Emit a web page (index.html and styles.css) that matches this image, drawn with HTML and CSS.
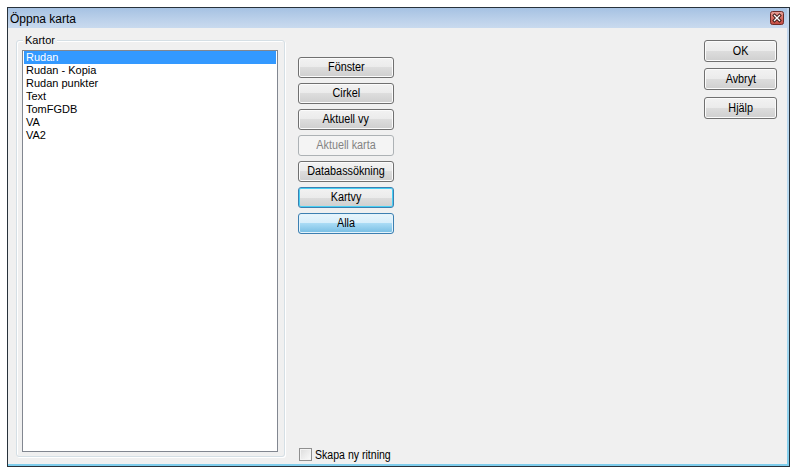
FILE: index.html
```html
<!DOCTYPE html>
<html lang="sv">
<head>
<meta charset="utf-8">
<title>Öppna karta</title>
<link rel="stylesheet" href="styles.css">
</head>
<body>
<div class="window">
  <div class="titlebar">
    <span class="title">Öppna karta</span>
    <span class="close">
      <svg width="14" height="14" viewBox="0 0 14 14">
        <defs>
          <linearGradient id="cg" x1="0" y1="0" x2="0" y2="1">
            <stop offset="0" stop-color="#e9a49c"/>
            <stop offset="0.5" stop-color="#d56d63"/>
            <stop offset="1" stop-color="#c24a40"/>
          </linearGradient>
        </defs>
        <rect x="0.5" y="0.5" width="13" height="13" rx="2" fill="url(#cg)" stroke="#6e2b26"/>
        <path d="M4.5 4.5 L9.5 9.5 M9.5 4.5 L4.5 9.5" stroke="#3b1714" stroke-width="3.2" stroke-linecap="square"/>
        <path d="M4.5 4.5 L9.5 9.5 M9.5 4.5 L4.5 9.5" stroke="#ffffff" stroke-width="1.4" stroke-linecap="square"/>
      </svg>
    </span>
  </div>
  <div class="client">
    <div class="group">
      <span class="group-label">Kartor</span>
      <ul class="listbox">
        <li class="selected">Rudan</li>
        <li>Rudan - Kopia</li>
        <li>Rudan punkter</li>
        <li>Text</li>
        <li>TomFGDB</li>
        <li>VA</li>
        <li>VA2</li>
      </ul>
    </div>
    <div class="actions">
      <button class="btn"><span class="cap">Fönster</span></button>
      <button class="btn"><span class="cap">Cirkel</span></button>
      <button class="btn"><span class="cap">Aktuell vy</span></button>
      <button class="btn disabled"><span class="cap">Aktuell karta</span></button>
      <button class="btn"><span class="cap">Databassökning</span></button>
      <button class="btn focused"><span class="cap">Kartvy</span></button>
      <button class="btn hot"><span class="cap">Alla</span></button>
      <label class="check"><span class="box"></span><span class="check-text">Skapa ny ritning</span></label>
    </div>
    <div class="dialog-buttons">
      <button class="btn"><span class="cap">OK</span></button>
      <button class="btn second"><span class="cap">Avbryt</span></button>
      <button class="btn third"><span class="cap">Hjälp</span></button>
    </div>
  </div>
</div>
</body>
</html>
```
FILE: styles.css
```css
body {
  margin: 0;
  background: #ffffff;
  font-family: "Liberation Sans", Arial, sans-serif;
}

.window {
  margin: 7px 0 0 7px;
  width: 783px;
  height: 460px;
  box-sizing: border-box;
  border: 1px solid #28323b;
  padding: 0 2px 2px 0;
  display: flex;
  flex-direction: column;
  background: linear-gradient(#c3d6ec, #b4dcf2 60%, #7fcdec);
}

.titlebar {
  height: 20px;
  flex: none;
  display: flex;
  align-items: center;
  padding: 0 3px 0 2px;
  background: linear-gradient(#a6c2e3, #bcd1ea 60%, #c9daee);
}

.title {
  flex: 1;
  font-size: 12px;
  color: #000;
  padding-top: 1px;
}

.close {
  width: 14px;
  height: 14px;
  display: block;
}

.close svg {
  display: block;
}

.client {
  flex: 1;
  display: flex;
  background: #f0f0f0;
  padding: 12px 0 0 8px;
}

.group {
  position: relative;
  flex: none;
  width: 269px;
  height: 417px;
  box-sizing: border-box;
  border: 1px solid #d5dfe5;
  border-radius: 3px;
  box-shadow: inset 1px 1px 0 #ffffff, 1px 1px 0 #ffffff;
  padding: 9px 6px 4px 5px;
}

.group-label {
  position: absolute;
  top: -8px;
  left: 6px;
  padding: 0 2px;
  background: #f0f0f0;
  font-size: 11px;
  line-height: 14px;
  color: #000;
}

.listbox {
  margin: 0;
  padding: 0 1px;
  list-style: none;
  width: 256px;
  height: 402px;
  box-sizing: border-box;
  border: 1px solid #828790;
  background: #ffffff;
  font-size: 11px;
}

.listbox li {
  height: 13px;
  line-height: 13px;
  padding-left: 2px;
  color: #000;
}

.listbox li.selected {
  background: #3399ff;
  color: #ffffff;
}

.btn {
  display: block;
  height: 21px;
  box-sizing: border-box;
  margin: 0;
  padding: 0;
  border: 1px solid #707070;
  border-radius: 3px;
  background: linear-gradient(#f2f2f2 0%, #ebebeb 50%, #dddddd 50%, #cfcfcf 100%);
  box-shadow: inset 0 0 0 1px #fbfbfb;
  font-family: "Liberation Sans", Arial, sans-serif;
  font-size: 12px;
  line-height: 19px;
  color: #000;
  text-align: center;
  white-space: nowrap;
}

.cap {
  display: inline-block;
  transform: scaleX(0.9);
}

.btn.disabled {
  border-color: #adb2b5;
  background: #f4f4f4;
  box-shadow: none;
  color: #838383;
}

.btn.focused {
  border-color: #3c7fb1;
  box-shadow: inset 0 0 0 1px #48d0f4;
}

.btn.hot {
  border-color: #3c7fb1;
  background: linear-gradient(#e8f5fc 0%, #d6eefb 50%, #a9dbf5 50%, #76bde3 100%);
  box-shadow: inset 0 0 0 1px #e4f3fb;
}

.actions {
  flex: none;
  width: 96px;
  margin-left: 13px;
  padding: 17px 0 3px 0;
  display: flex;
  flex-direction: column;
  gap: 5px;
}

.check {
  margin-top: auto;
  display: flex;
  align-items: center;
  gap: 3px;
  height: 13px;
  margin-left: 1px;
  width: 120px;
}

.box {
  width: 13px;
  height: 13px;
  box-sizing: border-box;
  border: 1px solid #8f8f8f;
  background: linear-gradient(135deg, #dcdcdc, #fbfbfb);
  box-shadow: inset 0 0 0 1px #f4f4f4;
  flex: none;
}

.check-text {
  display: inline-block;
  font-size: 12px;
  color: #000;
  white-space: nowrap;
  transform: scaleX(0.88);
  transform-origin: left center;
}

.dialog-buttons {
  flex: none;
  width: 73px;
  margin-left: 310px;
  display: flex;
  flex-direction: column;
}

.dialog-buttons .btn {
  height: 22px;
  line-height: 20px;
}

.dialog-buttons .second {
  margin-top: 6px;
}

.dialog-buttons .third {
  margin-top: 7px;
}
```
